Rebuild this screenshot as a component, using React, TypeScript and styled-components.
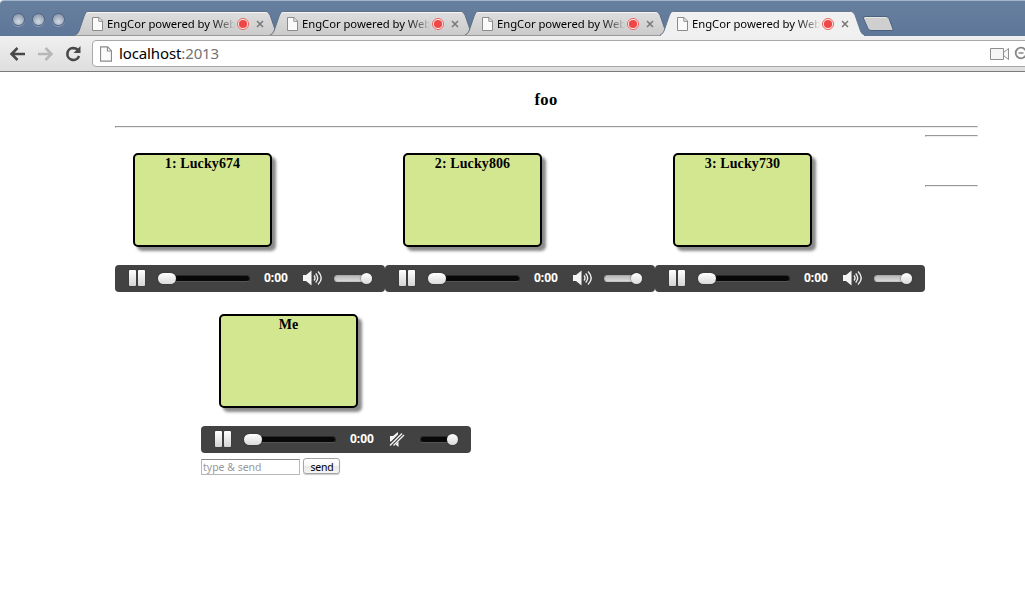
import React from "react";
import styled, { createGlobalStyle } from "styled-components";

const Global = createGlobalStyle`
  * { box-sizing: border-box; }
  body { margin: 0; background: #fff; overflow: hidden; font-family: "Liberation Serif", serif; color: #000; }
  svg { display: block; flex: none; }
`;

const Browser = styled.div`
  width: 100%;
  height: 613px;
  overflow: hidden;
`;

const TabStrip = styled.header`
  display: flex;
  height: 36px;
  padding: 10px 0 0 12px;
  border-top: 1px solid #a3b5cb;
  border-top-left-radius: 4px;
  background: linear-gradient(#67809f, #5e7698);
`;

const Lights = styled.div`
  display: flex;
  gap: 7px;
  width: 63px;
  padding-top: 2px;
`;

const Light = styled.span`
  width: 13px;
  height: 13px;
  border: 1px solid #52657f;
  border-radius: 50%;
  background: radial-gradient(circle at 50% 70%, #d2dae3 0, #a5b2c3 50%, #7f8fa6 90%);
  box-shadow: 0 1px 0 #8ba0bb;
`;

const Tab = styled.div<{ $active?: boolean }>`
  position: relative;
  z-index: ${(p) => (p.$active ? 2 : 1)};
  display: flex;
  align-items: center;
  width: 195px;
  height: 25px;
  padding-left: 17px;
  flex: none;
`;

const TabShape = styled.svg`
  position: absolute;
  left: 0;
  top: 0;
  z-index: -1;
`;

const TabTitle = styled.span`
  width: 129px;
  margin: 0 0 0 4px;
  white-space: nowrap;
  font: 11.3px/16px "Noto Sans", sans-serif;
  letter-spacing: -0.05px;
  background: linear-gradient(90deg, #000 80%, rgba(0, 0, 0, 0.5) 92%, rgba(0, 0, 0, 0.03) 99%);
  background-clip: text;
  -webkit-background-clip: text;
  color: transparent;
`;

const Toolbar = styled.div`
  display: flex;
  align-items: flex-start;
  height: 36px;
  padding: 4px 0 0 9px;
  border-bottom: 1px solid #7b7b7b;
  background: linear-gradient(#f0f0f0, #dedede);
`;

const NavIcons = styled.div`
  display: flex;
  align-items: center;
  width: 83px;
  height: 27px;
  gap: 11px;
`;

const AddressBar = styled.div`
  display: flex;
  align-items: center;
  flex: 1;
  height: 27px;
  margin-right: -8px;
  padding-left: 7px;
  border: 1px solid #a8a8a8;
  border-radius: 4px;
  background: #fff;
`;

const Url = styled.div`
  flex: 1;
  margin-left: 7px;
  padding-bottom: 2px;
  font: 15px/20px "Noto Sans", sans-serif;
  letter-spacing: -0.12px;
  color: #737373;
  b { font-weight: 400; color: #000; }
`;

const BarIcons = styled.div`
  display: flex;
  align-items: center;
  gap: 4px;
`;

const Page = styled.main`
  width: 863px;
  margin-left: 115px;
`;

const Title = styled.h1`
  margin: 0;
  padding: 19px 1px 0 0;
  height: 54px;
  font-size: 16.5px;
  line-height: 18px;
  letter-spacing: 0.4px;
  text-align: center;
`;

const Rule = styled.hr`
  width: 100%;
  height: 2px;
  margin: 0;
  border: 1px solid;
  border-color: #999 #eee #eee #999;
`;

const Row = styled.section`
  display: flex;
`;

const Peer = styled.div`
  width: 270px;
  padding-top: 25px;
`;

const Card = styled.div`
  width: 139px;
  height: 94px;
  margin: 0 0 18px 18px;
  border: 2px solid #000;
  border-radius: 5px;
  background: #d3e791;
  box-shadow: 4px 4px 3px #8a8a8a;
  font-size: 14px;
  font-weight: 700;
  line-height: 17px;
  letter-spacing: 0.1px;
  text-align: center;
`;

const Side = styled.aside`
  display: flex;
  flex-direction: column;
  gap: 48px;
  flex: 1;
  padding-top: 7px;
`;

const Mine = styled.section`
  width: 270px;
  margin: -3px 0 0 86px;
`;

const PlayerBar = styled.div`
  display: flex;
  align-items: center;
  width: 270px;
  height: 27px;
  padding-left: 14px;
  border-radius: 4px;
  background: #424242;
`;

const Pause = styled.div`
  display: flex;
  gap: 2px;
  width: 29px;
`;

const PauseBar = styled.i`
  width: 7px;
  height: 16px;
  margin-bottom: 1px;
  border-radius: 1px;
  background: linear-gradient(#fff, #d4d4d4);
  box-shadow: 0 0 1px #222;
`;

const Track = styled.div<{ $width: number; $light?: boolean }>`
  display: flex;
  align-items: center;
  justify-content: ${(p) => (p.$width < 50 ? "flex-end" : "flex-start")};
  width: ${(p) => p.$width}px;
  height: 7px;
  border: 1px solid ${(p) => (p.$light ? "#aaa" : "#292929")};
  border-bottom-color: ${(p) => (p.$light ? "#c4c4c4" : "#555")};
  border-radius: 4px;
  background: ${(p) => (p.$light ? "linear-gradient(#bbb, #d8d8d8)" : "#080808")};
`;

const Thumb = styled.i<{ $width: number }>`
  flex: none;
  width: ${(p) => p.$width}px;
  height: 11px;
  margin: 0 -1px;
  border-radius: 6px;
  background: linear-gradient(#fff, #dadada);
  box-shadow: 0 0 2px #333;
`;

const Time = styled.span`
  width: 38px;
  margin: 0 0 2px 14px;
  font: 700 12px/16px "Noto Sans", sans-serif;
  letter-spacing: 0;
  color: #fff;
`;

const Speaker = styled.div`
  width: 32px;
  padding-bottom: 1px;
`;

const SendForm = styled.form`
  display: flex;
  gap: 3px;
  padding-top: 5px;
`;

const Message = styled.input`
  width: 99px;
  height: 16px;
  margin-top: 1px;
  padding: 0 1px;
  border: 1px solid #b8b8b8;
  border-top-color: #888;
  border-radius: 0;
  outline: 0;
  font: 10.5px/14px "Noto Sans", sans-serif;
  &::placeholder { color: #999; opacity: 1; }
`;

const Send = styled.button`
  width: 37px;
  height: 16px;
  padding: 0 0 0 1px;
  border: 1px solid #a5a5a5;
  border-radius: 3px;
  background: linear-gradient(#fff, #f6f6f6 50%, #e8e8e8 51%, #f4f4f4);
  box-shadow: 0 1px 1px #ccc;
  font: 10.5px/16px "Noto Sans", sans-serif;
  letter-spacing: -0.2px;
  color: #000;
`;

function PageIcon({ w = 11, h = 14 }: { w?: number; h?: number }) {
  return (
    <svg width={w} height={h} viewBox="0 0 11 14">
      <path d="M.5.5H7L10.5 4V13.5H.5Z" fill="#fafafa" stroke="#8b8b8b" />
      <path d="M6.8.5V4.3H10.5" fill="none" stroke="#8b8b8b" />
    </svg>
  );
}

function BrowserTab({ active }: { active?: boolean }) {
  const fill = active ? "#f0f0f0" : "url(#inactiveTab)";
  return (
    <Tab $active={active}>
      <TabShape width="206" height="25" viewBox="0 0 206 25">
        <defs>
          <linearGradient id="inactiveTab" x1="0" y1="0" x2="0" y2="1">
            <stop offset="0" stopColor="#dedede" />
            <stop offset="1" stopColor="#cbcbcb" />
          </linearGradient>
        </defs>
        <path d="M0 24Q3 23 4 20L9.5 4Q10.5.5 14 .5H190Q193.500.5 195 4L200.500 20Q201.500 23.500 205 24" fill={fill} stroke={active ? "#68788f" : "#5d6d84"} />
        <path d="M11 2.5Q12 1.500 14 1.500H190Q192 1.500 193 2.500" fill="none" stroke="#f6f6f6" />
        {!active && <path d="M0 24.500H206" stroke="#999" />}
        {active && <path d="M1 24.500H204" stroke="#f0f0f0" />}
      </TabShape>
      <PageIcon />
      <TabTitle>EngCor powered by Web</TabTitle>
      <svg width="13" height="14" viewBox="0 0 13 14">
        <circle cx="7" cy="7" r="5.500" fill="#fff4f3" stroke="#ed5f5c" />
        <circle cx="7" cy="7" r="4.100" fill="#ee4747" />
      </svg>
      <svg width="17" height="12" viewBox="0 0 17 12">
        <path d="M8 3L14 9M14 3L8 9" stroke="#777" strokeWidth="1.500" />
      </svg>
    </Tab>
  );
}

function Player({ muted }: { muted?: boolean }) {
  return (
    <PlayerBar>
      <Pause><PauseBar /><PauseBar /></Pause>
      <Track $width={92}><Thumb $width={18} /></Track>
      <Time>0:00</Time>
      <Speaker>
        {muted ? (
          <svg width="22" height="18" viewBox="0 0 22 18">
            <path d="M2 6H5L10 2V4.500L3 11.500H2ZM10.500 11.500V17L7.500 14.500Z" fill="#f5f5f5" />
            <path d="M2 15.500L14 3.500M5.500 15.500L16 5" stroke="#f5f5f5" strokeWidth="1.300" />
          </svg>
        ) : (
          <svg width="22" height="18" viewBox="0 0 22 18">
            <path d="M1 6H4L9.500 1.500V16.500L4 12H1Z" fill="#f4f4f4" />
            <path d="M12 6.500Q14 9 12 11.500M13.700 4.500Q17.700 9 13.700 13.500M16 2.500Q22.500 9 16 15.500" fill="none" stroke="#eee" strokeWidth="1.400" />
          </svg>
        )}
      </Speaker>
      <Track $width={38} $light={!muted}><Thumb $width={11} /></Track>
    </PlayerBar>
  );
}

export default function App() {
  return (
    <Browser>
      <Global />
      <TabStrip>
        <Lights><Light /><Light /><Light /></Lights>
        <BrowserTab /><BrowserTab /><BrowserTab /><BrowserTab active />
        <svg width="40" height="24" viewBox="0 0 40 24">
          <path d="M10 5.500H31Q33 5.500 34 7.500L38 18Q38.500 19.500 37 19.500H16Q14 19.500 13 17.500L8.500 7.500Q8 5.500 10 5.500Z" fill="#cfcfcf" stroke="#4c6080" />
          <path d="M10 6.500H31" stroke="#e6e6e6" />
        </svg>
      </TabStrip>
      <Toolbar>
        <NavIcons>
          <svg width="17" height="16" viewBox="0 0 17 16"><path d="M16 8H3M8.500 2L2.500 8L8.500 14" fill="none" stroke="#484848" strokeWidth="2.500" /></svg>
          <svg width="17" height="16" viewBox="0 0 17 16"><path d="M1 8H14M8.500 2L14.500 8L8.500 14" fill="none" stroke="#b7b7b7" strokeWidth="2.500" /></svg>
          <svg width="17" height="18" viewBox="0 0 17 18"><path d="M13 5Q11 3 8 3A6 6 0 1 0 14 11" fill="none" stroke="#484848" strokeWidth="2.600" /><path d="M15.500 1V8H8.500Z" fill="#484848" /></svg>
        </NavIcons>
        <AddressBar>
          <PageIcon w={12} h={16} />
          <Url><b>localhost</b>:2013</Url>
          <BarIcons>
            <svg width="20" height="14" viewBox="0 0 20 14"><path d="M.5 1.500H13.500V12.500H.5ZM13.500 5.500L18.500 1.500V12.500L13.500 8.500" fill="#f5f5f5" stroke="#8e8e8e" /></svg>
            <svg width="18" height="16" viewBox="0 0 18 16"><circle cx="7" cy="7" r="5.300" fill="#fff" stroke="#888" strokeWidth="1.800" /><path d="M4.500 7H9.500M11 11L15 15" stroke="#888" strokeWidth="1.500" /></svg>
          </BarIcons>
        </AddressBar>
      </Toolbar>
      <Page>
        <Title>foo</Title>
        <Rule />
        <Row>
          {["1: Lucky674", "2: Lucky806", "3: Lucky730"].map((name) => (
            <Peer key={name}><Card>{name}</Card><Player /></Peer>
          ))}
          <Side><Rule /><Rule /></Side>
        </Row>
        <Mine>
          <Peer><Card>Me</Card><Player muted /></Peer>
          <SendForm onSubmit={(e) => e.preventDefault()}>
            <Message placeholder="type &amp; send" />
            <Send>send</Send>
          </SendForm>
        </Mine>
      </Page>
    </Browser>
  );
}
